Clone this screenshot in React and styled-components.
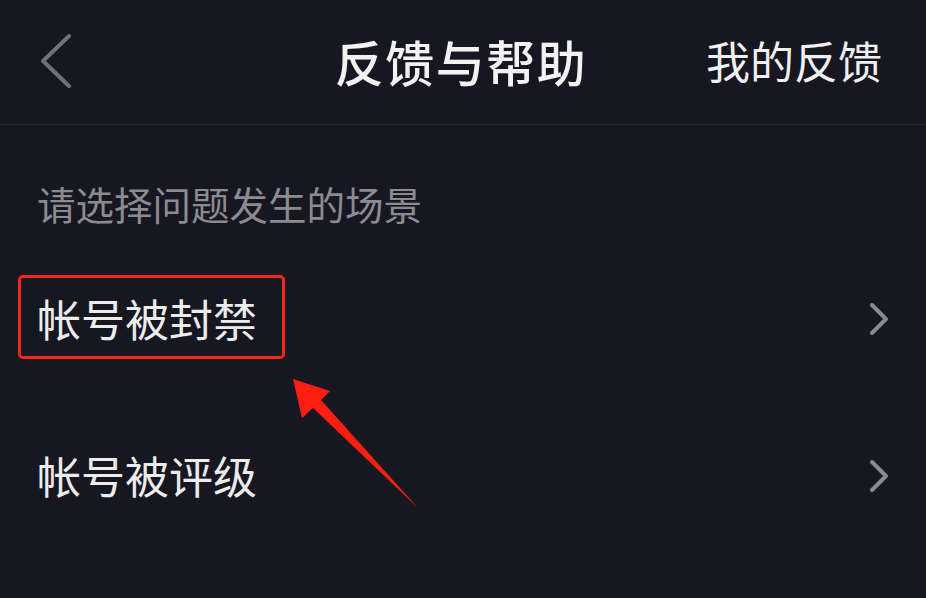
import React from "react";
import styled, { createGlobalStyle } from "styled-components";

const Global = createGlobalStyle`
  html, body { margin: 0; padding: 0; background: #161721; }
  body { font-family: "Noto Sans CJK SC", "Noto Sans", sans-serif; }
`;

const Page = styled.div`
  position: relative;
  width: 926px;
  height: 598px;
  background: #161721;
  overflow: hidden;
`;

const Header = styled.header`
  height: 124px;
  display: grid;
  grid-template-columns: 1fr auto 1fr;
  align-items: center;
  padding: 0 44px 0 40px;
  border-bottom: 1px solid #23242e;
`;

const BackButton = styled.div`
  display: flex;
  align-items: center;
  justify-self: start;
  margin-top: -2px;
`;

const Title = styled.h1`
  margin: -4px 0 0;
  font-size: 49px;
  font-weight: 500;
  color: #f2f2f2;
  line-height: 1;
  letter-spacing: 1.5px;
`;

const HeaderAction = styled.div`
  justify-self: end;
  margin-top: -4px;
  font-size: 44px;
  color: #f0f0f0;
  line-height: 1;
`;

const SectionLabel = styled.div`
  padding: 55px 37px 13px;
  font-size: 38.5px;
  line-height: 46px;
  color: #8b8b91;
`;

const Row = styled.div`
  height: 157px;
  display: flex;
  align-items: center;
  justify-content: space-between;
  padding: 0 37px;
`;

const RowLabel = styled.span`
  position: relative;
  font-size: 44px;
  line-height: 1;
  color: #ececec;
  ${(p) =>
    p.$highlight &&
    `
    &::after {
      content: "";
      position: absolute;
      left: -19px;
      right: -28px;
      top: -21px;
      bottom: -19px;
      border: 3px solid #ff2418;
      border-radius: 5px;
    }
  `}
`;

const Chevron = styled.svg`
  margin-top: 3px;
`;

const Arrow = styled.svg`
  position: absolute;
  left: 285px;
  top: 372px;
  width: 140px;
  height: 140px;
`;

const BackIcon = () => (
  <svg width="32" height="56" viewBox="0 0 32 56">
    <polyline
      points="29,3 3,28 29,53"
      fill="none"
      stroke="#707077"
      strokeWidth="4"
      strokeLinecap="round"
      strokeLinejoin="round"
    />
  </svg>
);

const ChevronRight = () => (
  <Chevron width="20" height="34" viewBox="0 0 20 34">
    <polyline
      points="3,3 17,17 3,31"
      fill="none"
      stroke="#8a8a92"
      strokeWidth="4"
      strokeLinecap="round"
      strokeLinejoin="round"
    />
  </Chevron>
);

export default function App() {
  return (
    <>
      <Global />
      <Page>
        <Header>
          <BackButton>
            <BackIcon />
          </BackButton>
          <Title>反馈与帮助</Title>
          <HeaderAction>我的反馈</HeaderAction>
        </Header>
        <SectionLabel>请选择问题发生的场景</SectionLabel>
        <Row>
          <RowLabel $highlight>帐号被封禁</RowLabel>
          <ChevronRight />
        </Row>
        <Row>
          <RowLabel>帐号被评级</RowLabel>
          <ChevronRight />
        </Row>
        <Arrow viewBox="0 0 140 140">
          <g transform="translate(-285,-372)">
            <polygon
              points="293,379 330,391 321,400 418,508 313,408 302,418"
              fill="#ff1e12"
            />
          </g>
        </Arrow>
      </Page>
    </>
  );
}
